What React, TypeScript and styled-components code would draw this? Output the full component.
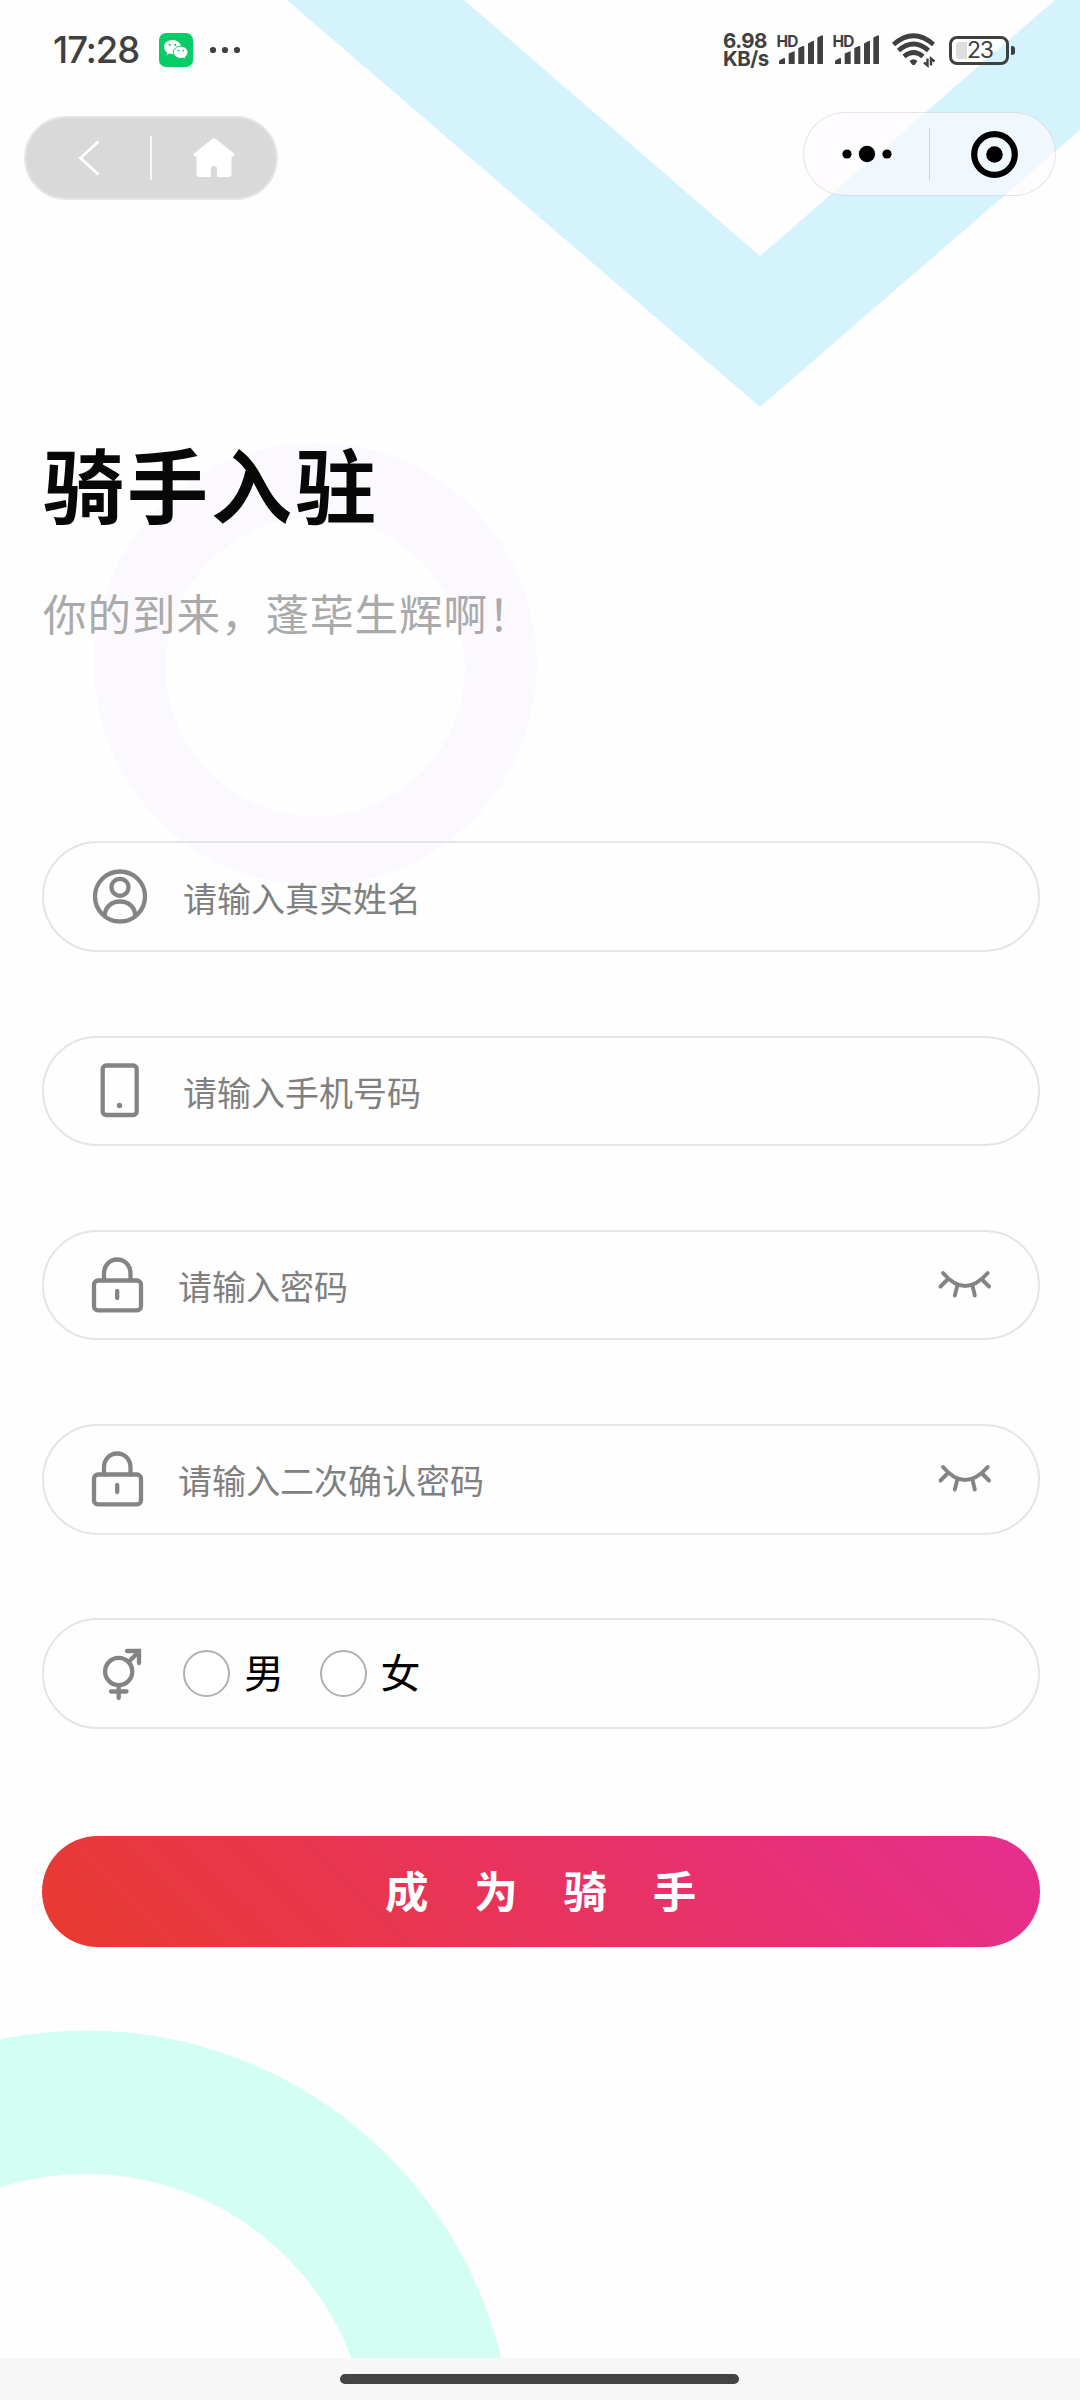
import React from "react";
import styled, { createGlobalStyle } from "styled-components";

const GlobalStyle = createGlobalStyle`
  * { box-sizing: border-box; }
  body {
    margin: 0;
    background: #fefefe;
    font-family: "Noto Sans CJK SC", sans-serif;
  }
`;

const Screen = styled.div`
  position: relative;
  display: flex;
  flex-direction: column;
  width: 1080px;
  height: 2400px;
  overflow: hidden;
  background: #fefefe;
`;

const Backdrop = styled.svg`
  position: absolute;
  inset: 0;
  display: block;
`;

const Layer = styled.div`
  position: relative;
  display: flex;
  flex-direction: column;
  flex: 1;
`;

const StatusBar = styled.header`
  display: flex;
  align-items: center;
  height: 100px;
  padding: 0 65px 0 53px;
  color: #404040;
`;

const Clock = styled.span`
  width: 106px;
  font: 500 36.5px/40px "Inter", sans-serif;
  letter-spacing: -1px;
`;

const Glyph = styled.svg`
  display: block;
  flex: none;
  overflow: visible;
`;

const MoreDots = styled(Glyph)`
  margin-left: 17px;
`;

const StatusRight = styled.div`
  display: flex;
  align-items: center;
  margin-left: auto;
`;

const Speed = styled.div`
  width: 54px;
  font: 700 20.5px/18px "Inter", sans-serif;
  letter-spacing: -0.5px;
  white-space: pre;
`;

const SignalBox = styled(Glyph)`
  margin-right: 10px;
  font: 700 15.5px "Inter", sans-serif;
`;

const WifiBox = styled(Glyph)`
  margin: 0 14px 0 3px;
`;

const Battery = styled.div`
  display: flex;
  align-items: center;
  gap: 2px;
`;

const BatteryBody = styled.div`
  display: flex;
  align-items: center;
  width: 60px;
  height: 29px;
  padding-left: 4px;
  border: 3px solid #404040;
  border-radius: 8px;
  font: 400 23px/23px "Inter", sans-serif;
  letter-spacing: -1.4px;
`;

const BatteryLevel = styled.i`
  width: 11px;
  height: 17px;
  border-radius: 3px 0 0 3px;
  background: #dedede;
`;

const BatteryTip = styled.i`
  width: 4px;
  height: 9px;
  border-radius: 1px 3px 3px 1px;
  background: #404040;
`;

const NavBar = styled.nav`
  display: flex;
  justify-content: space-between;
  align-items: flex-start;
  height: 116px;
  padding: 12px 24px 0 24px;
`;

const Capsule = styled.div<{ $solid?: boolean }>`
  display: flex;
  align-items: center;
  width: ${(p) => (p.$solid ? 254 : 253)}px;
  height: 84px;
  border-radius: 42px;
  margin-top: ${(p) => (p.$solid ? 4 : 0)}px;
  border: ${(p) => (p.$solid ? "2px solid #e6e6e6" : "1px solid rgba(0, 0, 0, 0.1)")};
  background: ${(p) => (p.$solid ? "#d9d9d9" : "rgba(253, 251, 255, 0.66)")};
`;

const CapsuleSlot = styled.div`
  display: flex;
  flex: 1;
  align-items: center;
  justify-content: center;
`;

const CapsuleDivider = styled.i<{ $light?: boolean }>`
  width: ${(p) => (p.$light ? 2 : 1)}px;
  height: ${(p) => (p.$light ? 44 : 52)}px;
  background: ${(p) => (p.$light ? "#f7f7f7" : "#cdd6dc")};
`;

const Main = styled.main`
  display: flex;
  flex-direction: column;
  flex: 1;
  padding: 0 40px 0 42px;
`;

const Heading = styled.div`
  display: flex;
  flex-direction: column;
  height: 625.4px;
  padding-top: 216px;
`;

const Title = styled.h1`
  margin: 0 0 51px 1px;
  color: #080808;
  font-size: 81px;
  line-height: 100px;
  font-weight: 700;
  letter-spacing: 3px;
`;

const Subtitle = styled.p`
  margin: 0;
  padding-left: 1px;
  color: #aaa;
  font-size: 43.5px;
  line-height: 60px;
  letter-spacing: 1px;
`;

const Form = styled.form`
  display: flex;
  flex-direction: column;
  gap: 83.6px;
`;

const Field = styled.div`
  display: flex;
  align-items: center;
  height: 110.6px;
  padding: 0 46px 0 46px;
  border: 2px solid #e5e5e5;
  border-radius: 56px;
`;

const FieldIcon = styled(Glyph)<{ $gap: number }>`
  margin-right: ${(p) => p.$gap}px;
`;

const Placeholder = styled.span`
  flex: 1;
  padding-top: 2px;
  color: #808080;
  font-size: 34px;
  line-height: 50px;
`;

const Option = styled.label`
  display: flex;
  align-items: center;
  width: 136.5px;
  gap: 14px;
  color: #000;
  font-size: 40px;
  line-height: 56px;
`;

const OptionText = styled.span`
  padding-bottom: 4px;
`;

const Radio = styled.i`
  width: 47px;
  height: 47px;
  border: 2px solid #b0b0b0;
  border-radius: 50%;
  background: #fff;
`;

const Submit = styled.button`
  height: 111px;
  margin: 24px 0 0;
  padding: 0 0 3px 45px;
  border: 0;
  border-radius: 56px;
  background: linear-gradient(45deg, #e83a33 4%, #e9335f 50%, #e62e8d 97%);
  color: #fff;
  font: 700 43.5px/60px "Noto Sans CJK SC", sans-serif;
  letter-spacing: 45.7px;
`;

const HomeArea = styled.footer`
  display: flex;
  justify-content: center;
  height: 42px;
  padding: 16px 1px 0 0;
  background: #f7f7f7;
`;

const HomeHandle = styled.i`
  width: 399px;
  height: 10px;
  border-radius: 5px;
  background: #444;
`;

const stroke = {
  fill: "none",
  stroke: "#848484",
  strokeWidth: 4.3,
  strokeLinecap: "round" as const,
  strokeLinejoin: "round" as const,
};

const WeChat = () => (
  <Glyph width="34" height="34" viewBox="0 0 34 34">
    <rect width="34" height="34" rx="7" fill="#07cd66" />
    <path
      d="M13.5 7C8.8 7 5 10.1 5 14c0 2.200 1.200 4.100 3 5.400l-.4 2.700 3-1.500c.9.3 1.900.4 2.900.4 4.700 0 8.500-3.100 8.500-7s-3.800-7-8.500-7z"
      fill="#fff"
    />
    <path
      d="M21.800 13.200c-4.100 0-7.400 2.700-7.400 6.100s3.300 6.100 7.400 6.100c.8 0 1.600-.1 2.300-.3l2.500 1.300-.5-2.200c1.800-1.100 2.900-2.900 2.900-4.900 0-3.400-3.200-6.100-7.200-6.100z"
      fill="#fff"
      stroke="#07cd66"
      strokeWidth="1"
    />
    <g fill="#07cd66">
      <circle cx="10.700" cy="11.800" r="1.100" />
      <circle cx="16.300" cy="11.800" r="1.100" />
      <circle cx="19.400" cy="17.600" r="0.900" />
      <circle cx="24.200" cy="17.600" r="0.900" />
    </g>
  </Glyph>
);

const Signal = () => (
  <SignalBox width="46" height="34" viewBox="0 0 46 34" fill="#404040">
    <text x="-0.500" y="13.500" textLength="22">HD</text>
    <path d="M2 31v-2.500q0-1 1-1.500l4-2q1-.4 1 .6V31z" />
    <path d="M11.700 31V20.500l6-2.500v13z" />
    <path d="M21.300 31V15l4.500-2q1.500-.5 1.500 1v17z" />
    <path d="M31 31V10.500l4.500-2.500q1.500-.6 1.500 1v22z" />
    <path d="M40.300 31V5.500q0-1 1-1.500l3.200-1.500q1.500-.6 1.500 1V31z" />
  </SignalBox>
);

const Wifi = () => (
  <WifiBox width="43" height="34" viewBox="0 0 43 34">
    <g fill="none" stroke="#404040" strokeWidth="4.600">
      <path d="M1.500 11.500Q21.500-6 41.500 11.500" />
      <path d="M6.500 17.500Q21.500 4.500 36.500 17.500" />
      <path d="M12 23.500Q21.500 15.500 31 23.500" />
    </g>
    <path d="M17.500 28q4-3.500 8 0l-2.500 3.500q-1.500 1.500-3 0z" fill="#404040" />
    <path d="M35.500 25.500v7l-3.500-3M39 32.500v-7l3.500 3" fill="none" stroke="#404040" strokeWidth="2.400" />
  </WifiBox>
);

const UserIcon = () => (
  <FieldIcon $gap={33} width="60" height="60" viewBox="0 0 60 60" {...stroke}>
    <circle cx="30" cy="29.500" r="25" />
    <circle cx="30" cy="20.300" r="8.500" />
    <path d="M14.700 49c0-8.500 6.500-14.500 15.300-14.500s15.300 6 15.300 14.500" />
  </FieldIcon>
);

const PhoneIcon = () => (
  <FieldIcon $gap={33} width="60" height="60" viewBox="0 0 60 60" {...stroke}>
    <rect x="12.700" y="4.500" width="34" height="49.500" rx="3.500" />
    <circle cx="29.500" cy="44.500" r="2.700" fill="#848484" stroke="none" />
  </FieldIcon>
);

const LockIcon = () => (
  <FieldIcon $gap={28} width="60" height="60" viewBox="0 0 60 60" {...stroke}>
    <rect x="4" y="25.500" width="47" height="29.800" rx="4" />
    <path d="M14 25.500v-7c0-8 5.500-14 13.200-14s13.300 6 13.300 14v7" />
    <path d="M27.200 36v7" />
  </FieldIcon>
);

const GenderIcon = () => (
  <FieldIcon $gap={33} width="60" height="60" viewBox="0 0 60 60" {...stroke} strokeLinecap="butt" strokeLinejoin="miter">
    <circle cx="28.700" cy="28.500" r="13.600" />
    <path d="M38.500 19 48.500 9" />
    <path d="M37 8h12v12M21 48.500h15.500M28.700 43v12" strokeLinecap="round" />
  </FieldIcon>
);

const ClosedEye = () => (
  <Glyph width="54" height="30" viewBox="0 0 54 30" {...stroke} strokeWidth={3.9}>
    <path d="M5 3Q27 29 49.700 3" />
    <path d="M9.500 9.500 2.500 16.500M19 17l-2.200 8.500M34.800 17l2 8.500M44 9.500l7 7" />
  </Glyph>
);

const fields = [
  { Icon: UserIcon, hint: "请输入真实姓名" },
  { Icon: PhoneIcon, hint: "请输入手机号码" },
  { Icon: LockIcon, hint: "请输入密码", secret: true },
  { Icon: LockIcon, hint: "请输入二次确认密码", secret: true },
];

export default function App() {
  return (
    <Screen>
      <GlobalStyle />
      <Backdrop width="1080" height="2400" viewBox="0 0 1080 2400">
        <path d="M287 0H464L760 256 1055 0H1080V130L760 407z" fill="#d5f3fd" />
        <path
          fillRule="evenodd"
          d="M94 664a221.500 221.500 0 1 0 443 0a221.500 221.500 0 1 0 -443 0zM166 667a149.500 149.500 0 1 0 299 0a149.500 149.500 0 1 0 -299 0z"
          fill="#fbf8ff"
        />
        <circle cx="86" cy="2457.500" r="355.200" fill="none" stroke="#d4fef3" strokeWidth="143.600" />
      </Backdrop>

      <Layer>
        <StatusBar>
          <Clock>17:28</Clock>
          <WeChat />
          <MoreDots width="30" height="8" viewBox="0 0 30 8" fill="#404040">
            <circle cx="3" cy="4" r="3.100" />
            <circle cx="15" cy="4" r="3.100" />
            <circle cx="27" cy="4" r="3.100" />
          </MoreDots>
          <StatusRight>
            <Speed>{"6.98\nKB/s"}</Speed>
            <Signal />
            <Signal />
            <Wifi />
            <Battery>
              <BatteryBody>
                <BatteryLevel />
                23
              </BatteryBody>
              <BatteryTip />
            </Battery>
          </StatusRight>
        </StatusBar>

        <NavBar>
          <Capsule $solid>
            <CapsuleSlot>
              <Glyph width="20" height="36" viewBox="0 0 20 36" fill="none" stroke="#fff" strokeWidth="2.800">
                <path d="M20.500 1.500 2.500 18l18 16.500" />
              </Glyph>
            </CapsuleSlot>
            <CapsuleDivider $light />
            <CapsuleSlot>
              <Glyph width="42" height="40" viewBox="0 0 42 40" fill="#fff">
                <path d="M19 1q2-1.500 4 0l18 14.500q1.500 2-1 3h-1.500V36q0 3-3 3H24V31q0-3-3-3t-3 3v8H6.500q-3 0-3-3V18.500H2q-2.500-1-1-3z" />
              </Glyph>
            </CapsuleSlot>
          </Capsule>
          <Capsule>
            <CapsuleSlot>
              <Glyph width="50" height="18" viewBox="0 0 50 18" fill="#000">
                <circle cx="5" cy="9" r="4.600" />
                <circle cx="25" cy="9" r="8.200" />
                <circle cx="45" cy="9" r="4.600" />
              </Glyph>
            </CapsuleSlot>
            <CapsuleDivider />
            <CapsuleSlot>
              <Glyph width="48" height="48" viewBox="0 0 48 48">
                <circle cx="25.500" cy="24.500" r="20.300" fill="none" stroke="#000" strokeWidth="6.200" />
                <circle cx="25.500" cy="24.500" r="8.300" fill="#000" />
              </Glyph>
            </CapsuleSlot>
          </Capsule>
        </NavBar>

        <Main>
          <Heading>
            <Title>骑手入驻</Title>
            <Subtitle>你的到来，蓬荜生辉啊！</Subtitle>
          </Heading>
          <Form>
            {fields.map(({ Icon, hint, secret }) => (
              <Field key={hint}>
                <Icon />
                <Placeholder>{hint}</Placeholder>
                {secret && <ClosedEye />}
              </Field>
            ))}
            <Field>
              <GenderIcon />
              <Option>
                <Radio />
                <OptionText>男</OptionText>
              </Option>
              <Option>
                <Radio />
                <OptionText>女</OptionText>
              </Option>
            </Field>
            <Submit type="button">成为骑手</Submit>
          </Form>
        </Main>

        <HomeArea>
          <HomeHandle />
        </HomeArea>
      </Layer>
    </Screen>
  );
}
